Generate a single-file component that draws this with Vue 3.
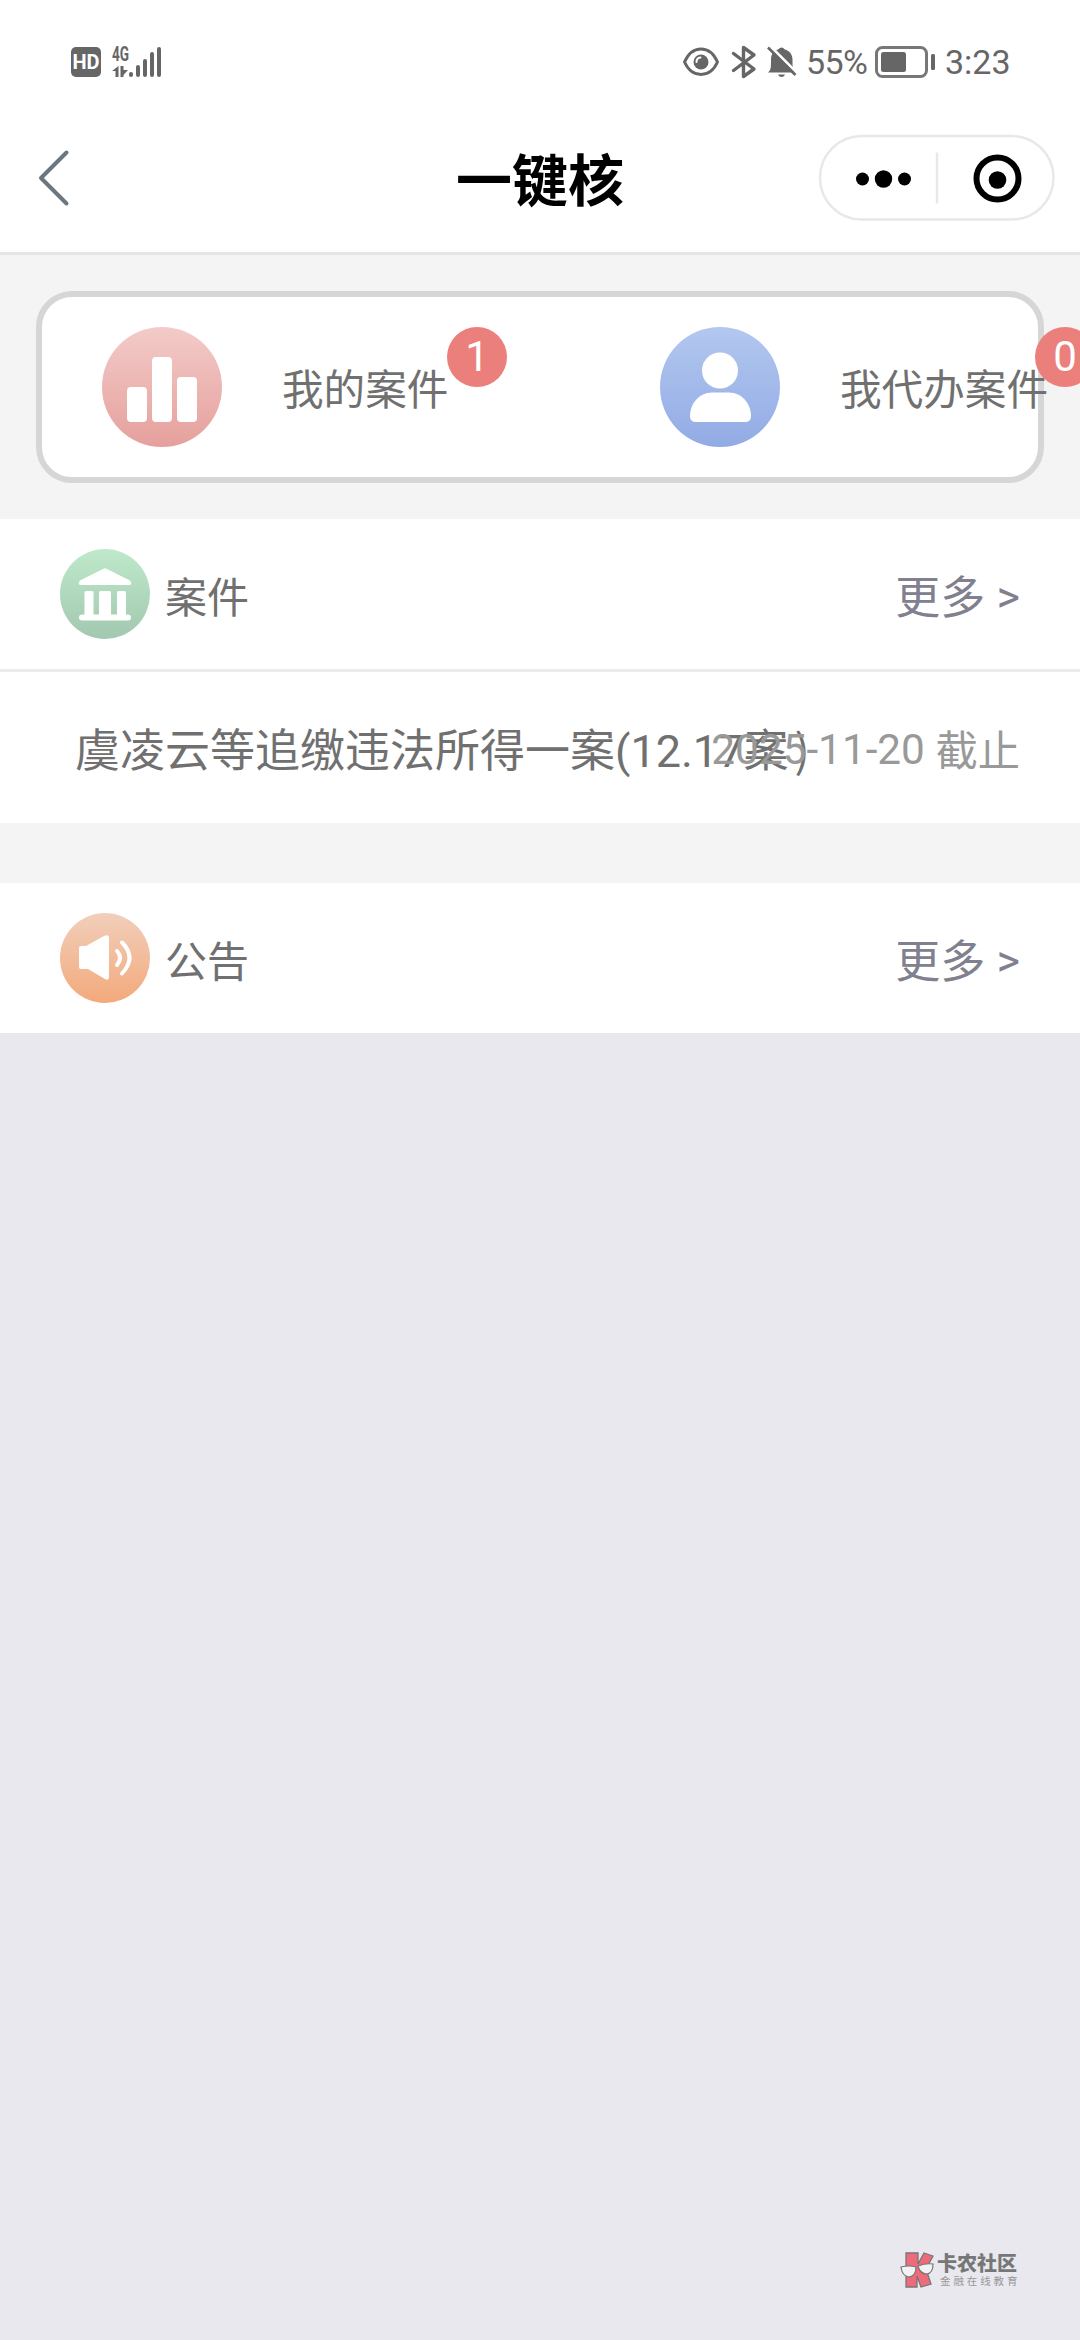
<script setup>
const entries = [
  { kind: 'chart', label: '我的案件', count: 1 },
  { kind: 'person', label: '我代办案件', count: 0 },
]
const signal = [5, 12, 18, 25, 30]
</script>

<template>
  <div class="page">
    <header class="top">
      <div class="status">
        <div class="status-left">
          <span class="hd">HD</span>
          <div class="net">
            <span class="net-type">4G</span>
            <svg width="16" height="11" viewBox="0 0 16 11" fill="#666">
              <path d="M6.500 0v11H3.500V5H0zM8.500 0h3v4H16l-4.500 5v2h-3z" />
            </svg>
          </div>
          <div class="bars">
            <i v-for="h in signal" :key="h" :style="{ height: h + 'px' }"></i>
          </div>
        </div>
        <div class="status-right">
          <svg class="eye" width="38" height="32" viewBox="0 0 38 32">
            <path d="M2.500 16C10-1.500 28-1.500 35.500 16 28 32.500 10 32.500 2.500 16z" fill="none" stroke="#666" stroke-width="3" stroke-linejoin="round" />
            <circle cx="19" cy="16" r="7.500" fill="#666" />
            <path d="M14.500 16a4.500 4.500 0 0 1 4-4.500" fill="none" stroke="#fff" stroke-width="2" stroke-linecap="round" />
          </svg>
          <svg class="bt" width="26" height="34" viewBox="0 0 26 34">
            <path d="M2.500 8.500L23 24 12.500 31.500V2.500L23 10 2.500 25.500" fill="none" stroke="#666" stroke-width="3.400" stroke-linejoin="round" stroke-linecap="round" />
          </svg>
          <svg class="bell" width="30" height="32" viewBox="0 0 30 32">
            <path d="M1 26.500c3-2.500 3-5 3-13 0-6 3.500-9.500 7.500-10.200a3.500 3.500 0 0 1 6 0C23 5 25.500 9 25.500 13.500c0 8 0 10.500 2.500 13z" fill="#666" />
            <path d="M11 28.500h7q-1 2.500-3.500 2.500T11 28.500z" fill="#666" />
            <path d="M3.500 0.500l28 28" stroke="#fff" stroke-width="3" />
            <path d="M1 1.500l27.500 27.500" stroke="#666" stroke-width="2.600" />
          </svg>
          <span class="pct">55%</span>
          <svg class="battery" width="62" height="32" viewBox="0 0 62 32">
            <rect x="1.500" y="1.500" width="50" height="29" rx="6" fill="none" stroke="#777" stroke-width="3" />
            <rect x="6" y="6" width="25" height="20" rx="2.500" fill="#666" />
            <rect x="56" y="8" width="4" height="16" rx="1.500" fill="#666" />
          </svg>
          <span class="clock">3:23</span>
        </div>
      </div>
      <div class="nav">
        <svg class="back" width="34" height="58" viewBox="0 0 34 58">
          <path d="M30.500 3.500L5 29l25.500 25.500" fill="none" stroke="#6a7780" stroke-width="4" stroke-linejoin="round" stroke-linecap="round" />
        </svg>
        <h1>一键核</h1>
        <svg class="capsule" width="238" height="88" viewBox="0 0 238 88">
          <rect x="2" y="2" width="233.500" height="83.500" rx="41.750" fill="#fff" stroke="#e8e8e8" stroke-width="2.500" />
          <path d="M119 18.500v51" stroke="#e8e8e8" stroke-width="2.500" />
          <circle cx="44.500" cy="45" r="6.500" />
          <circle cx="65.500" cy="45" r="8.700" />
          <circle cx="86.500" cy="45" r="6.500" />
          <circle cx="179.500" cy="44.500" r="21" fill="none" stroke="#000" stroke-width="6" />
          <circle cx="179.500" cy="46" r="8.800" />
        </svg>
      </div>
    </header>

    <section class="overview">
      <div class="card">
        <div v-for="e in entries" :key="e.kind" class="entry">
          <svg v-if="e.kind === 'chart'" width="120" height="120" viewBox="0 0 120 120">
            <defs>
              <linearGradient id="gRed" x1="0" y1="0" x2="0" y2="1">
                <stop offset="0" stop-color="#f3cbc9" />
                <stop offset="1" stop-color="#e5a09c" />
              </linearGradient>
            </defs>
            <circle cx="60" cy="60" r="60" fill="url(#gRed)" />
            <g fill="#fff">
              <rect x="25" y="60" width="20" height="35" rx="4" />
              <rect x="50" y="30" width="20" height="65" rx="4" />
              <rect x="75" y="50" width="20" height="45" rx="4" />
            </g>
          </svg>
          <svg v-else width="120" height="120" viewBox="0 0 120 120">
            <defs>
              <linearGradient id="gBlue" x1="0" y1="0" x2="0" y2="1">
                <stop offset="0" stop-color="#b2c8f0" />
                <stop offset="1" stop-color="#92abe4" />
              </linearGradient>
            </defs>
            <circle cx="60" cy="60" r="60" fill="url(#gBlue)" />
            <circle cx="60" cy="43.500" r="18" fill="#fff" />
            <path d="M30 89C30 77 39 65.500 52 65.500H69C82 65.500 91 77 91 89Q91 95 85 95H36Q30 95 30 89z" fill="#fff" />
          </svg>
          <span class="entry-label" :class="e.kind">{{ e.label }}<b class="badge">{{ e.count }}</b></span>
        </div>
      </div>
    </section>

    <section class="head ruled">
      <svg width="90" height="90" viewBox="0 0 90 90">
        <defs>
          <linearGradient id="gGreen" x1="0" y1="0" x2="0" y2="1">
            <stop offset="0" stop-color="#bfe9cb" />
            <stop offset="1" stop-color="#a2c8af" />
          </linearGradient>
        </defs>
        <circle cx="45" cy="45" r="45" fill="url(#gGreen)" />
        <g fill="#fff">
          <path d="M43 20q2-1.500 4 0L70 31.500q3 4.500-1 4.500H21q-4 0-1-4.500z" />
          <rect x="24.500" y="42" width="9" height="26" rx="1.500" />
          <rect x="39" y="42" width="12" height="26" rx="1.500" />
          <rect x="57" y="42" width="9" height="26" rx="1.500" />
          <rect x="19" y="65.500" width="52" height="6" rx="3" />
        </g>
      </svg>
      <h2>案件</h2>
      <span class="more">更多 <i>&gt;</i></span>
    </section>
    <div class="case">
      <span class="case-name">虞凌云等追缴违法所得一案(12.17案<i>)</i></span>
      <span class="deadline"><i>2025-11-20</i> 截止</span>
    </div>

    <section class="head notice">
      <svg width="90" height="90" viewBox="0 0 90 90">
        <defs>
          <linearGradient id="gOrange" x1="0" y1="0" x2="0" y2="1">
            <stop offset="0" stop-color="#f1cfbb" />
            <stop offset="1" stop-color="#f3a97b" />
          </linearGradient>
        </defs>
        <circle cx="45" cy="45" r="45" fill="url(#gOrange)" />
        <path d="M21 33h5L44 23q5-2 5 2v39q0 4-4 2L28 56h-7q-2 0-2-2V35q0-2 2-2z" fill="#fff" />
        <g fill="none" stroke="#fff" stroke-linecap="round">
          <path d="M57 38q6 6.500 0 14" stroke-width="4" />
          <path d="M62 29.500q15 15 0 31" stroke-width="4" />
        </g>
      </svg>
      <h2>公告</h2>
      <span class="more">更多 <i>&gt;</i></span>
    </section>

    <footer class="brand">
      <svg width="36" height="37" viewBox="0 0 36 37">
        <path d="M6 1h12v11L24 1l9 3-7 13 5 15-10 3-4-11v11H6z" fill="#ee6b7c" stroke="#777" stroke-width="1.300" />
        <path d="M1 15q8-2 15 0 0 9-7 10-7-1-8-10zM18 14q8-3 15-2 0 9-6 10-7 0-9-8z" fill="#f3f3f5" stroke="#777" stroke-width="1.200" />
      </svg>
      <div class="brand-text">
        <strong>卡农社区</strong>
        <small>金融在线教育</small>
      </div>
    </footer>
  </div>
</template>

<style>
body {
  margin: 0;
  background: #e8e8ee;
}
</style>

<style scoped>
.page {
  width: 1080px;
  height: 2340px;
  overflow: hidden;
  display: flex;
  flex-direction: column;
  background: #e8e8ee;
  font-family: Roboto, "Noto Sans CJK SC", sans-serif;
  color: #707070;
}
svg {
  display: block;
  flex: none;
}
i {
  font-style: normal;
}
.top {
  height: 252px;
  flex: none;
  background: #fff;
  border-bottom: 3px solid #e5e5e5;
}
.status {
  height: 124px;
  display: flex;
  justify-content: space-between;
  padding: 0 70px 0 71px;
  color: #666;
}
.status-left,
.status-right {
  height: 123px;
  display: flex;
  align-items: center;
}
.hd {
  width: 30px;
  height: 30px;
  border-radius: 5px;
  background: #666;
  color: #fff;
  font: 700 20px/31px Roboto, sans-serif;
  text-align: center;
}
.net {
  height: 30px;
  margin-left: 11px;
  display: flex;
  flex-direction: column;
  justify-content: space-between;
}
.net-type {
  font: 700 20px/15px Roboto, sans-serif;
  width: 17px;
  transform: scaleX(0.68);
  transform-origin: left;
}
.bars {
  height: 30px;
  display: flex;
  align-items: flex-end;
  gap: 3px;
}
.bars i {
  width: 4px;
  border-radius: 2px;
  background: #666;
}
.status-right {
  font-size: 34px;
}
.bt {
  margin-left: 11px;
}
.bell {
  margin-left: 10px;
}
.pct {
  margin-left: 9px;
  width: 62px;
  letter-spacing: -0.600px;
}
.battery {
  margin-left: 7px;
}
.clock {
  margin-left: 8px;
  width: 65px;
}
.nav {
  height: 108px;
  display: flex;
  align-items: center;
  justify-content: space-between;
  padding: 0 24px 0 36px;
}
.back {
  margin-right: 168px;
}
h1 {
  margin: 8px 0 0 24px;
  color: #000;
  font-size: 56px;
  line-height: 100px;
  font-weight: 700;
}
.overview {
  flex: none;
  background: #f4f4f4;
  padding: 36px;
}
.card {
  box-sizing: border-box;
  width: 1008px;
  height: 192px;
  border: 6px solid #d6d6d6;
  border-radius: 36px;
  background: #fff;
  display: flex;
  align-items: center;
  padding-left: 60px;
}
.entry {
  width: 558px;
  flex: none;
  display: flex;
  align-items: center;
  gap: 60px;
}
.entry-label {
  position: relative;
  padding-top: 8px;
  font-size: 41.600px;
  line-height: 60px;
  white-space: nowrap;
}
.badge {
  position: absolute;
  left: 165px;
  top: -26px;
  width: 60px;
  height: 60px;
  border-radius: 50%;
  background: #eb7f7b;
  color: #fff;
  font-size: 42px;
  font-weight: 400;
  text-align: center;
}
.person .badge {
  left: 195px;
}
.head {
  position: relative;
  height: 150px;
  flex: none;
  background: #fff;
  display: flex;
  align-items: center;
  padding: 0 60px;
}
.ruled {
  border-bottom: 3px solid #ececec;
}
h2 {
  margin: 0 0 0 15px;
  font-size: 42px;
  font-weight: 400;
}
.more {
  margin-left: auto;
  font-size: 45px;
  color: #80808f;
}
.more i {
  display: inline-block;
  transform: translateY(-2px);
}
.case {
  position: relative;
  height: 151px;
  flex: none;
  background: #fff;
  display: flex;
  align-items: center;
  padding: 0 60px 0 75px;
}
.case-name {
  font-size: 45px;
  white-space: nowrap;
}
.case-name i {
  padding-left: 6px;
  font-family: "Noto Sans CJK SC", sans-serif;
}
.deadline {
  position: absolute;
  right: 60px;
  font-size: 42.300px;
  color: #999;
  white-space: nowrap;
}
.deadline i {
  display: inline-block;
  transform: translateY(-2px);
}
.notice {
  border-top: 60px solid #f4f4f4;
}
.brand {
  margin-top: auto;
  margin-bottom: 51px;
  padding-right: 59px;
  display: flex;
  justify-content: flex-end;
  gap: 1px;
}
.brand-text {
  width: 84px;
  padding-top: 1px;
  display: flex;
  flex-direction: column;
}
.brand-text strong {
  font-size: 20px;
  line-height: 22px;
  color: #777;
  font-weight: 900;
}
.brand-text small {
  margin-left: 3px;
  font-size: 10.500px;
  line-height: 14px;
  letter-spacing: 2.900px;
  color: #999;
  white-space: nowrap;
}
</style>
